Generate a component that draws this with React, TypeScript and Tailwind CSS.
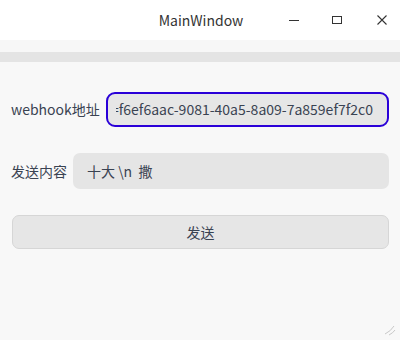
export default function App() {
  return (
    <div
      className="w-[400px] h-[340px] flex flex-col bg-[#f8f8f8] text-[#333] overflow-hidden"
      style={{ fontFamily: '"Noto Sans CJK SC", "Noto Sans", sans-serif' }}
    >
      {/* title bar */}
      <div className="h-[40px] bg-white flex items-center relative shrink-0">
        <div className="absolute left-0 right-0 text-center text-[14px] text-[#333] top-[10px] leading-[20px] pl-[2px]">
          MainWindow
        </div>
        <div className="ml-auto flex items-center h-full">
          <div className="w-[10px] h-[1px] bg-[#333] ml-[289px] mt-[0px]" />
          <div className="w-[10px] h-[8px] border border-[#333] ml-[33px]" />
          <svg width="10" height="10" viewBox="0 0 10 10" className="ml-[35px] mr-[15px]">
            <path d="M0.5 0.5 L9.5 9.5 M9.5 0.5 L0.5 9.5" stroke="#333" strokeWidth="1.1" />
          </svg>
        </div>
      </div>
      <div className="h-[12px] bg-[#f7f7f7] shrink-0" />
      <div className="h-[10px] bg-[#e4e4e4] shrink-0" />

      <div className="flex flex-col px-[11px] pt-[30px]">
        <div className="flex items-center">
          <span className="text-[14px] text-[#3a4352] w-[95px] shrink-0">webhook地址</span>
          <div className="flex-1 h-[35px] border-2 border-[#2a00d8] rounded-[9px] bg-[#e6e6e6] flex items-center pl-[8px] pr-[6px] text-[14px] text-[#3a4352]">
            <div className="overflow-hidden whitespace-nowrap flex-1">
              <span className="ml-[-5px]">=f6ef6aac-9081-40a5-8a09-7a859ef7f2c0</span>
            </div>
          </div>
        </div>

        <div className="flex items-center mt-[26px]">
          <span className="text-[14px] text-[#3a4352] w-[62px] shrink-0">发送内容</span>
          <div className="flex-1 h-[36px] rounded-[7px] bg-[#e5e5e5] flex items-center pl-[14px] text-[14px] text-[#3a4352] whitespace-pre">
            十大 \n  撒
          </div>
        </div>

        <div className="mt-[26px] ml-[1px] h-[34px] rounded-[7px] border border-[#d6d6d6] bg-[#e6e6e6] flex items-center justify-center text-[14px] text-[#3a4352]">
          发送
        </div>
      </div>

      <div className="mt-auto flex justify-end pr-[4px] pb-[4px]">
        <svg width="14" height="14" viewBox="0 0 14 14">
          <path d="M3 12 Q9 9 12 4" stroke="#c8c8c8" strokeWidth="1" fill="none" />
          <path d="M7 13 Q11 11 13 8" stroke="#c8c8c8" strokeWidth="1" fill="none" />
        </svg>
      </div>
    </div>
  );
}
